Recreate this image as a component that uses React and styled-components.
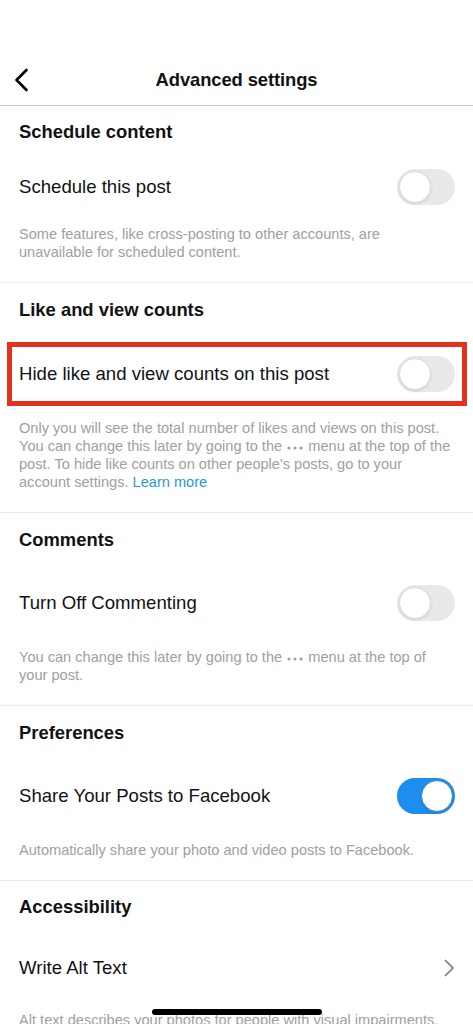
import React from "react";
import styled, { createGlobalStyle } from "styled-components";

const GlobalStyle = createGlobalStyle`
  html, body {
    margin: 0;
    padding: 0;
    background: #fff;
  }
  body {
    font-family: "Liberation Sans", Arial, sans-serif;
    color: #121212;
    -webkit-font-smoothing: antialiased;
  }
`;

// 화면 전체
const Screen = styled.div`
  position: relative;
  width: 100%;
  height: 100vh;
  overflow: hidden;
  background: #fff;
  padding-top: 55px;
  box-sizing: border-box;
`;

const Header = styled.header`
  position: relative;
  display: flex;
  align-items: center;
  justify-content: center;
  height: 50px;
  border-bottom: 1px solid #c6c6c8;
`;

const BackButton = styled.button`
  position: absolute;
  left: 13px;
  top: 13px;
  display: flex;
  padding: 0;
  border: 0;
  background: transparent;
  cursor: pointer;
`;

const Title = styled.h1`
  margin: 0;
  font-size: 18.4px;
  font-weight: 700;
  letter-spacing: -0.1px;
`;

const Section = styled.section`
  display: flex;
  flex-direction: column;
  border-bottom: 1px solid #ebebeb;
`;

const SectionTitle = styled.h2`
  display: flex;
  align-items: center;
  height: ${(p) => p.$h || 54}px;
  margin: 0;
  padding: 0 19px;
  font-size: 18.4px;
  font-weight: 700;
`;

// 설정 한 줄 (라벨 + 토글/화살표)
const Row = styled.div`
  position: relative;
  display: flex;
  align-items: center;
  justify-content: space-between;
  height: ${(p) => p.$h || 74}px;
  padding: 0 18px 0 19px;

  ${(p) =>
    p.$highlighted &&
    `
    &::after {
      content: "";
      position: absolute;
      left: 7px;
      right: 6px;
      top: 5px;
      bottom: 5px;
      border: 5px solid #e5301b;
      pointer-events: none;
    }
  `}
`;

const Label = styled.span`
  font-size: 18.6px;
  color: #121212;
`;

const Description = styled.p`
  margin: 0;
  padding: ${(p) => p.$top || 8}px 22px 21px 19px;
  font-size: 14.6px;
  line-height: 18px;
  color: #a0a0a0;
`;

const DotsIcon = styled.svg`
  vertical-align: 1px;
  margin: 0 1px;
`;

const Link = styled.a`
  color: #2a9ad6;
  text-decoration: none;
`;

const Track = styled.button`
  position: relative;
  flex-shrink: 0;
  width: 58px;
  height: 36px;
  padding: 0;
  border: 0;
  border-radius: 18px;
  background: ${(p) => (p.$on ? "#1b8ef0" : "#e9e9ea")};
  cursor: pointer;
`;

const Knob = styled.span`
  position: absolute;
  top: 2px;
  left: ${(p) => (p.$on ? "24px" : "2px")};
  width: 32px;
  height: 32px;
  border-radius: 50%;
  background: #fff;
  box-sizing: border-box;
  border: ${(p) => (p.$on ? "1.5px solid #2d86d6" : "1px solid #dcdcdc")};
  box-shadow: 0 1px 3px rgba(0, 0, 0, 0.12);
`;

const HomeIndicator = styled.div`
  position: absolute;
  left: 50%;
  bottom: 9px;
  width: 170px;
  height: 6px;
  margin-left: -85px;
  border-radius: 3px;
  background: #000;
`;

function Toggle({ on }) {
  return (
    <Track $on={on}>
      <Knob $on={on} />
    </Track>
  );
}

// 본문 안의 ••• 메뉴 아이콘
function Dots() {
  return (
    <DotsIcon width="16" height="4" viewBox="0 0 16 4">
      <circle cx="2" cy="2" r="1.6" fill="#a0a0a0" />
      <circle cx="8" cy="2" r="1.6" fill="#a0a0a0" />
      <circle cx="14" cy="2" r="1.6" fill="#a0a0a0" />
    </DotsIcon>
  );
}

function ChevronLeft() {
  return (
    <svg width="18" height="24" viewBox="0 0 18 24">
      <path
        d="M13.5 2 L3.5 12 L13.5 22"
        fill="none"
        stroke="#000"
        strokeWidth="2.6"
        strokeLinecap="round"
        strokeLinejoin="round"
      />
    </svg>
  );
}

function ChevronRight() {
  return (
    <svg width="12" height="18" viewBox="0 0 12 18">
      <path
        d="M2.5 1.5 L10 9 L2.5 16.5"
        fill="none"
        stroke="#7a7a7a"
        strokeWidth="1.7"
        strokeLinecap="round"
        strokeLinejoin="round"
      />
    </svg>
  );
}

export default function App() {
  return (
    <Screen>
      <GlobalStyle />
      <Header>
        <BackButton aria-label="Back">
          <ChevronLeft />
        </BackButton>
        <Title>Advanced settings</Title>
      </Header>

      <Section>
        <SectionTitle $h={52}>Schedule content</SectionTitle>
        <Row $h={58}>
          <Label>Schedule this post</Label>
          <Toggle />
        </Row>
        <Description $top={9}>
          Some features, like cross-posting to other accounts, are
          <br />
          unavailable for scheduled content.
        </Description>
      </Section>

      <Section>
        <SectionTitle>Like and view counts</SectionTitle>
        <Row $highlighted>
          <Label>Hide like and view counts on this post</Label>
          <Toggle />
        </Row>
        <Description>
          Only you will see the total number of likes and views on this post.
          <br />
          You can change this later by going to the <Dots /> menu at the top of
          the
          <br />
          post. To hide like counts on other people's posts, go to your
          <br />
          account settings. <Link>Learn more</Link>
        </Description>
      </Section>

      <Section>
        <SectionTitle $h={53}>Comments</SectionTitle>
        <Row>
          <Label>Turn Off Commenting</Label>
          <Toggle />
        </Row>
        <Description>
          You can change this later by going to the <Dots /> menu at the top of
          <br />
          your post.
        </Description>
      </Section>

      <Section>
        <SectionTitle $h={53}>Preferences</SectionTitle>
        <Row>
          <Label>Share Your Posts to Facebook</Label>
          <Toggle on />
        </Row>
        <Description>
          Automatically share your photo and video posts to Facebook.
        </Description>
      </Section>

      <Section>
        <SectionTitle $h={52}>Accessibility</SectionTitle>
        <Row $h={70}>
          <Label>Write Alt Text</Label>
          <ChevronRight />
        </Row>
        <Description>
          Alt text describes your photos for people with visual impairments.
        </Description>
      </Section>

      <HomeIndicator />
    </Screen>
  );
}
